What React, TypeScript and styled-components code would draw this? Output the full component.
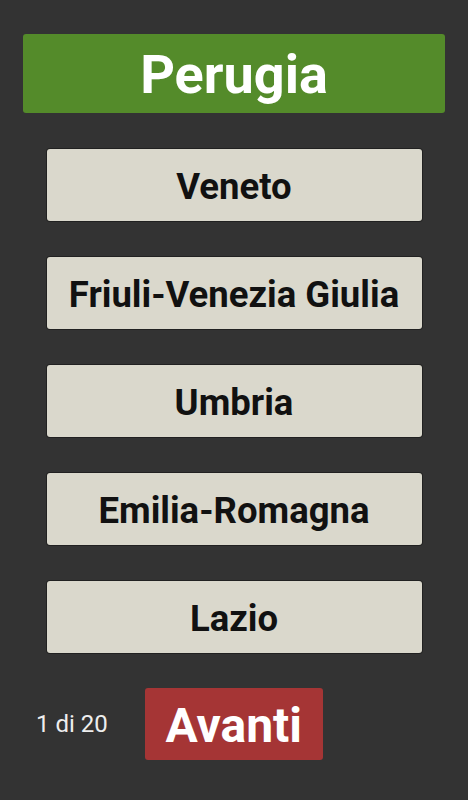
import styled, { createGlobalStyle } from 'styled-components';

const GlobalStyle = createGlobalStyle`
  html, body {
    margin: 0;
    padding: 0;
    background: #333333;
  }
  * {
    box-sizing: border-box;
  }
`;

const Screen = styled.div`
  width: 100%;
  min-height: 800px;
  background: #333333;
  font-family: Roboto, 'Noto Sans', sans-serif;
  display: flex;
  flex-direction: column;
  align-items: center;
  padding-top: 34px;
`;

const Question = styled.div`
  width: 422px;
  height: 79px;
  padding-top: 2px;
  border-radius: 3px;
  background: #548b2a;
  color: #fff;
  font-size: 54px;
  font-weight: 700;
  display: flex;
  align-items: center;
  justify-content: center;
`;

const Options = styled.div`
  margin-top: 36px;
  display: flex;
  flex-direction: column;
  gap: 36px;
`;

const Option = styled.button`
  width: 375px;
  height: 72px;
  padding: 3px 0 0;
  border: none;
  border-radius: 3px;
  background: #dad8cc;
  box-shadow: 0 0 0 1px rgba(0, 0, 0, 0.35);
  color: #111;
  font-family: inherit;
  font-size: 36.5px;
  font-weight: 700;
  display: flex;
  align-items: center;
  justify-content: center;
  cursor: pointer;
`;

const Footer = styled.div`
  width: 100%;
  margin-top: 35px;
  padding-left: 36px;
  display: flex;
  align-items: center;
  gap: 37px;
`;

const Counter = styled.span`
  color: #eee;
  font-size: 24px;
`;

const NextButton = styled.button`
  height: 72px;
  width: 178px;
  padding: 2px 0 0;
  border: none;
  border-radius: 3px;
  background: #a53535;
  color: #fff;
  font-family: inherit;
  font-size: 48px;
  font-weight: 700;
  display: flex;
  align-items: center;
  justify-content: center;
  cursor: pointer;
`;

const regions = ['Veneto', 'Friuli-Venezia Giulia', 'Umbria', 'Emilia-Romagna', 'Lazio'];

const App = () => {
  return (
    <Screen>
      <GlobalStyle />
      <Question>Perugia</Question>
      <Options>
        {regions.map((name) => (
          <Option key={name}>{name}</Option>
        ))}
      </Options>
      <Footer>
        <Counter>1 di 20</Counter>
        <NextButton>Avanti</NextButton>
      </Footer>
    </Screen>
  );
};

export default App;
